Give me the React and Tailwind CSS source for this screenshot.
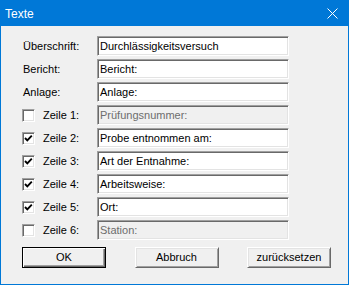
import React from 'react';

const font = { fontFamily: '"Liberation Sans", Arial, sans-serif' };

const fields = [
  { label: 'Überschrift:', value: 'Durchlässigkeitsversuch' },
  { label: 'Bericht:', value: 'Bericht:' },
  { label: 'Anlage:', value: 'Anlage:' },
  { label: 'Zeile 1:', value: 'Prüfungsnummer:', check: true, checked: false },
  { label: 'Zeile 2:', value: 'Probe entnommen am:', check: true, checked: true },
  { label: 'Zeile 3:', value: 'Art der Entnahme:', check: true, checked: true },
  { label: 'Zeile 4:', value: 'Arbeitsweise:', check: true, checked: true },
  { label: 'Zeile 5:', value: 'Ort:', check: true, checked: true },
  { label: 'Zeile 6:', value: 'Station:', check: true, checked: false },
];

const CheckBox = ({ checked }) => (
  <div className="w-[13px] h-[13px] bg-white border border-t-[#a0a0a0] border-l-[#a0a0a0] border-r-white border-b-white shadow-[inset_1px_1px_0_#696969,inset_-1px_-1px_0_#e3e3e3] flex items-center justify-center">
    {checked && (
      <svg width="11" height="11" viewBox="0 0 11 11">
        <polyline points="2,5 4.3,7.3 8.8,2.6" fill="none" stroke="#000" strokeWidth="1.9" />
      </svg>
    )}
  </div>
);

const Field = ({ value, disabled }) => (
  <div
    className={`w-[192px] h-[20px] flex items-center pl-[2px] border border-t-[#a0a0a0] border-l-[#a0a0a0] border-r-white border-b-white shadow-[inset_1px_1px_0_#696969,inset_-1px_-1px_0_#e3e3e3] text-[11px] leading-none ${
      disabled ? 'bg-[#f0f0f0] text-[#6d6d6d]' : 'bg-white text-black'
    }`}
  >
    {value}
  </div>
);

const Button = ({ children, primary }) => (
  <div
    className={`w-[84px] h-[21px] flex items-center justify-center text-[11px] text-black bg-[#f0f0f0] ${
      primary
        ? 'border border-[#000] shadow-[inset_1px_1px_0_#fff,inset_-1px_-1px_0_#696969,inset_-2px_-2px_0_#a0a0a0]'
        : 'border border-t-white border-l-white border-r-[#696969] border-b-[#696969] shadow-[inset_1px_1px_0_#e3e3e3,inset_-1px_-1px_0_#a0a0a0]'
    }`}
  >
    {children}
  </div>
);

export default function App() {
  return (
    <div className="w-[349px] h-[285px] border border-[#0078d7] bg-[#f0f0f0] flex flex-col" style={font}>
      <div className="h-[25px] bg-[#0078d7] flex items-center justify-between pl-[4px] pr-[10px] text-white text-[12px]">
        <span>Texte</span>
        <svg width="11" height="11" viewBox="0 0 11 11">
          <path d="M0.5 0.5L10.5 10.5M10.5 0.5L0.5 10.5" stroke="#fff" strokeWidth="1" />
        </svg>
      </div>
      <div className="flex flex-col pl-[21px] pt-[10px] gap-[3px]">
        {fields.map((f) => (
          <div key={f.label} className="flex items-center h-[20px]">
            <div className="w-[75px] flex items-center text-[11px] text-black">
              {f.check ? (
                <>
                  <CheckBox checked={f.checked} />
                  <span className="ml-[8px]">{f.label}</span>
                </>
              ) : (
                <span className="pl-[1px]">{f.label}</span>
              )}
            </div>
            <Field value={f.value} disabled={f.check && !f.checked} />
          </div>
        ))}
        <div className="w-[309px] flex justify-between mt-[4px]">
          <Button primary>OK</Button>
          <Button>Abbruch</Button>
          <Button>zurücksetzen</Button>
        </div>
      </div>
    </div>
  );
}
